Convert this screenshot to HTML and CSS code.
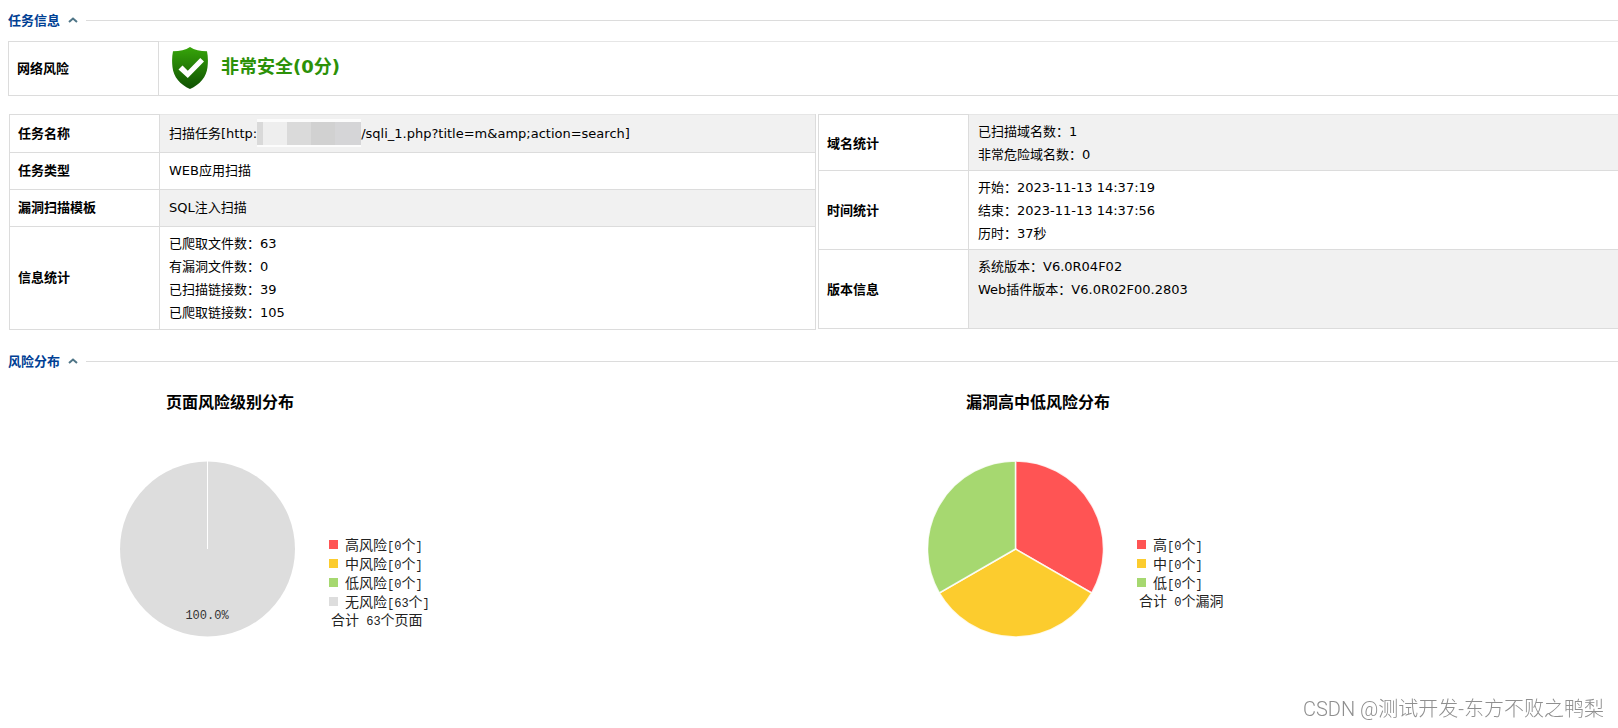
FILE: index.html
```html
<!DOCTYPE html>
<html lang="zh-CN">
<head>
<meta charset="utf-8">
<title>任务信息</title>
<link rel="stylesheet" href="styles.css">
</head>
<body>
<main class="report">
  <section class="section">
    <h2 class="section-title">
      <span>任务信息</span>
      <svg class="caret" viewBox="0 0 10 7" aria-hidden="true"><path d="M1 5 5 1.500 9 5"/></svg>
    </h2>
    <table class="info risk">
      <tr>
        <th scope="row">网络风险</th>
        <td>
          <div class="risk-level">
            <svg class="shield" viewBox="0 0 36 42" aria-hidden="true">
              <defs>
                <linearGradient id="shield-fill" x1="0" y1="0" x2="0" y2="1">
                  <stop offset="0" stop-color="#37a50a"/>
                  <stop offset="1" stop-color="#0f5002"/>
                </linearGradient>
              </defs>
              <path fill="url(#shield-fill)" d="M18 0c4.500 3 10 4.300 17 4.300 1 4.700 1.200 10 .5 16C34.500 30 28 37.500 18 42 8 37.500 1.500 30 .5 20.300c-.7-6-.5-11.300.5-16C8 4.300 13.500 3 18 0z"/>
              <path fill="#fff" d="m6.500 22.500 4-4 5.300 5.300L28.300 11l3.700 3.500L15.800 31z"/>
            </svg>
            <strong>非常安全(0分)</strong>
          </div>
        </td>
      </tr>
    </table>
    <div class="columns">
      <table class="info task">
        <tr class="single first shaded">
          <th scope="row">任务名称</th>
          <td><div class="task-name">扫描任务[http:<span class="mask"></span>/sqli_1.php?title=m&amp;amp;action=search]</div></td>
        </tr>
        <tr class="single">
          <th scope="row">任务类型</th>
          <td>WEB应用扫描</td>
        </tr>
        <tr class="single shaded">
          <th scope="row">漏洞扫描模板</th>
          <td>SQL注入扫描</td>
        </tr>
        <tr class="totals">
          <th scope="row">信息统计</th>
          <td>已爬取文件数：63<br>有漏洞文件数：0<br>已扫描链接数：39<br>已爬取链接数：105</td>
        </tr>
      </table>
      <table class="info">
        <tr class="shaded">
          <th scope="row">域名统计</th>
          <td>已扫描域名数：1<br>非常危险域名数：0</td>
        </tr>
        <tr>
          <th scope="row">时间统计</th>
          <td>开始：2023-11-13 14:37:19<br>结束：2023-11-13 14:37:56<br>历时：37秒</td>
        </tr>
        <tr class="shaded version">
          <th scope="row">版本信息</th>
          <td>系统版本：V6.0R04F02<br>Web插件版本：V6.0R02F00.2803</td>
        </tr>
      </table>
    </div>
  </section>

  <section class="section">
    <h2 class="section-title">
      <span>风险分布</span>
      <svg class="caret" viewBox="0 0 10 7" aria-hidden="true"><path d="M1 5 5 1.500 9 5"/></svg>
    </h2>
    <div class="columns charts">
      <div class="chart">
        <h3>页面风险级别分布</h3>
        <div class="plot">
          <svg class="pie" viewBox="0 0 176 176" role="img" aria-label="页面风险级别分布">
            <circle cx="87.500" cy="88" r="87.500" fill="#ddd"/>
            <path d="M87.500 0v88" stroke="#fff"/>
            <text x="87" y="158">100.0%</text>
          </svg>
          <ul class="legend">
            <li><i class="swatch high"></i>高风险<span class="num">[0</span>个<span class="num">]</span></li>
            <li><i class="swatch medium"></i>中风险<span class="num">[0</span>个<span class="num">]</span></li>
            <li><i class="swatch low"></i>低风险<span class="num">[0</span>个<span class="num">]</span></li>
            <li><i class="swatch none"></i>无风险<span class="num">[63</span>个<span class="num">]</span></li>
            <li class="total">合计<span class="num"> 63</span>个页面</li>
          </ul>
        </div>
      </div>
      <div class="chart">
        <h3>漏洞高中低风险分布</h3>
        <div class="plot">
          <svg class="pie" viewBox="0 0 176 176" role="img" aria-label="漏洞高中低风险分布">
            <g stroke="#fff" stroke-width="1.500" stroke-opacity=".85">
              <path fill="#ff5454" d="M87.500 88V0a88 88 0 0 1 76.200 132z"/>
              <path fill="#fccc2e" d="m87.500 88 76.200 44a88 88 0 0 1-152.400 0z"/>
              <path fill="#a6d870" d="m87.500 88-76.200 44A88 88 0 0 1 87.500 0z"/>
            </g>
          </svg>
          <ul class="legend">
            <li><i class="swatch high"></i>高<span class="num">[0</span>个<span class="num">]</span></li>
            <li><i class="swatch medium"></i>中<span class="num">[0</span>个<span class="num">]</span></li>
            <li><i class="swatch low"></i>低<span class="num">[0</span>个<span class="num">]</span></li>
            <li class="total">合计<span class="num"> 0</span>个漏洞</li>
          </ul>
        </div>
      </div>
    </div>
  </section>
</main>
<div class="watermark">CSDN @测试开发-东方不败之鸭梨</div>
</body>
</html>
```
FILE: styles.css
```css
body {
  margin: 0;
  background: #fff;
  color: #000;
  font: 13px/23px "DejaVu Sans", "Noto Sans CJK SC", sans-serif;
  overflow-x: hidden;
}

.report {
  padding: 9px 0 0 8px;
}

.section {
  margin-bottom: 20px;
}

.section-title {
  display: flex;
  align-items: center;
  gap: 8px;
  margin: 0 0 9px;
  color: #004094;
  font-size: 13px;
  line-height: 23px;
}

.section-title::after {
  content: "";
  flex: 1;
  border-top: 1px solid #dcdcdc;
}

.caret {
  width: 10px;
  height: 7px;
  fill: none;
  stroke: #4f7587;
  stroke-width: 2;
}

.info {
  width: 100%;
  border-collapse: collapse;
  table-layout: fixed;
}

.info th,
.info td {
  box-sizing: border-box;
  border: 1px solid #dcdcdc;
  padding: 5px 9px 4px;
  text-align: left;
}

.info th {
  width: 150px;
  padding-left: 8px;
}

.info td {
  border-top-color: #e6e6e6;
}

.task th,
.task td {
  padding-top: 4px;
  padding-bottom: 5px;
}

.shaded td {
  background: #f1f1f1;
}

.single {
  height: 37px;
}

.first {
  height: 38px;
}

.totals {
  height: 103px;
}

.version {
  height: 79px;
}

.version td {
  vertical-align: top;
}

.risk th,
.risk td {
  height: 54px;
  padding-top: 0;
  padding-bottom: 0;
}

.risk td {
  border-right: 0;
  padding-bottom: 2px;
}

.risk-level {
  display: flex;
  align-items: center;
  gap: 13px;
  padding-left: 4px;
}

.risk-level strong {
  color: #2c9108;
  font-size: 18px;
  padding-bottom: 2px;
}

.shield {
  width: 36px;
  height: 42px;
}

.columns {
  display: grid;
  grid-template-columns: 1fr 1fr;
  align-items: start;
  gap: 2px;
  margin: 18px -7px 0 1px;
}

.task-name {
  display: flex;
  align-items: center;
  white-space: nowrap;
}

.mask {
  width: 104px;
  height: 23px;
  border-top: 3px solid #fcfcfc;
  border-bottom: 2px solid #fcfcfc;
  background: linear-gradient(90deg, #d9d9d9 6px, #eee 6px 30px, #dadada 30px 54px, #d1d1d1 54px 78px, #d5d5d7 78px);
}

.charts {
  margin: 18px -6px 0 0;
  gap: 0;
}

.chart {
  padding-left: 112px;
}

.chart h3 {
  width: 220px;
  margin: 0 0 46px;
  font-size: 16px;
  line-height: 24px;
  text-align: center;
}

.plot {
  display: flex;
  align-items: flex-start;
  gap: 33px;
}

.pie {
  width: 176px;
  height: 176px;
}

.pie text {
  fill: #333;
  font: 12px "Liberation Mono", monospace;
  text-anchor: middle;
}

.legend {
  margin: 74px 0 0;
  padding: 0;
  list-style: none;
  color: #222;
  font: 14px/19px "Noto Sans CJK SC", sans-serif;
}

.legend li {
  display: flex;
  align-items: baseline;
  height: 19px;
  white-space: pre;
}

.legend .total {
  padding-left: 2px;
  line-height: 17px;
}

.num {
  font-family: "Liberation Mono", monospace;
  font-size: 12px;
}

.swatch {
  align-self: center;
  width: 9px;
  height: 9px;
  margin-right: 7px;
}

.high { background: #ff5454; }
.medium { background: #fccc2e; }
.low { background: #a6d870; }
.none { background: #ddd; }

.watermark {
  position: fixed;
  right: 14px;
  bottom: 4px;
  color: #8f8f8f;
  font: 300 20px/30px Roboto, "Noto Sans CJK SC", sans-serif;
}
```
